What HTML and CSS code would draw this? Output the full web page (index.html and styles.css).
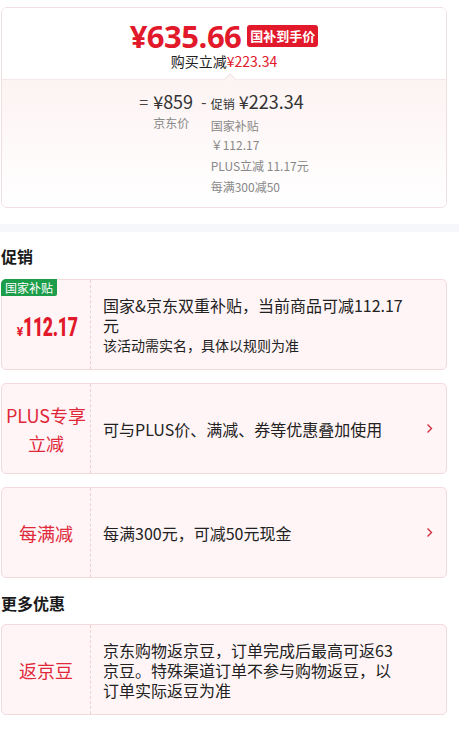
FILE: index.html
```html
<!DOCTYPE html>
<html lang="zh-CN">
<head>
  <meta charset="UTF-8">
  <meta name="viewport" content="width=device-width, initial-scale=1.0">
  <title>促销</title>
  <link rel="stylesheet" href="styles.css">
</head>
<body>
  <div class="top">
    <div class="summary">
      <div class="summary-head">
        <div class="final">
          <span class="final-price">¥635.66</span>
          <span class="final-tag">国补到手价</span>
        </div>
        <div class="saved">购买立减<span class="red">¥223.34</span></div>
      </div>
      <div class="summary-body">
        <div class="calc">
          <span class="op">=</span>
          <div class="term">
            <div class="amt">¥859</div>
            <div class="lbl">京东价</div>
          </div>
          <span class="op minus">-</span>
          <div class="term">
            <div class="amt"><small>促销</small> ¥223.34</div>
            <ul class="lbl details">
              <li>国家补贴<br>￥112.17</li>
              <li>PLUS立减 11.17元</li>
              <li>每满300减50</li>
            </ul>
          </div>
        </div>
      </div>
    </div>
  </div>

  <div class="band"></div>

  <div class="promos">
    <h2 class="heading">促销</h2>

    <div class="promo">
      <span class="tag">国家补贴</span>
      <div class="promo-left"><span class="num"><small>¥</small><b>112.17</b></span></div>
      <div class="promo-right">
        <div class="desc">国家&amp;京东双重补贴，当前商品可减112.17<br>元</div>
        <div class="note">该活动需实名，具体以规则为准</div>
      </div>
    </div>

    <div class="promo">
      <div class="promo-left"><span class="label">PLUS专享<br>立减</span></div>
      <div class="promo-right">
        <div class="desc">可与PLUS价、满减、券等优惠叠加使用</div>
      </div>
      <svg class="arrow" width="7" height="11" viewBox="0 0 7 11"><path d="M1.5 1.5 L5.5 5.5 L1.5 9.5" fill="none" stroke="#d0303c" stroke-width="1.4"/></svg>
    </div>

    <div class="promo">
      <div class="promo-left"><span class="label">每满减</span></div>
      <div class="promo-right">
        <div class="desc">每满300元，可减50元现金</div>
      </div>
      <svg class="arrow" width="7" height="11" viewBox="0 0 7 11"><path d="M1.5 1.5 L5.5 5.5 L1.5 9.5" fill="none" stroke="#d0303c" stroke-width="1.4"/></svg>
    </div>

    <h2 class="heading more">更多优惠</h2>

    <div class="promo">
      <div class="promo-left"><span class="label">返京豆</span></div>
      <div class="promo-right">
        <div class="desc">京东购物返京豆，订单完成后最高可返63<br>京豆。特殊渠道订单不参与购物返豆，以<br>订单实际返豆为准</div>
      </div>
    </div>
  </div>
</body>
</html>
```

FILE: styles.css
```css
body {
  margin: 0;
  background: #fff;
  color: #1a1a1a;
  font-family: "Noto Sans CJK SC", "Noto Sans", sans-serif;
}

.top {
  padding: 7px 12px 16px 1px;
}

.summary {
  border: 1px solid #f2dfe2;
  border-radius: 6px;
  overflow: hidden;
}

.summary-head {
  position: relative;
  height: 71px;
  padding-top: 11px;
  box-sizing: border-box;
  text-align: center;
  background: #fff;
}

/* little notch on the divider */
.summary-head::after {
  content: "";
  position: absolute;
  left: 224px;
  bottom: -4px;
  width: 7px;
  height: 7px;
  background: #fdf4f4;
  border-top: 1px solid #f3e4e6;
  border-left: 1px solid #f3e4e6;
  transform: rotate(45deg);
}

.final {
  display: flex;
  justify-content: center;
  align-items: center;
  height: 34px;
}

.final-price {
  font-family: "Open Sans", sans-serif;
  font-weight: 700;
  font-size: 31px;
  letter-spacing: -0.5px;
  color: #e2182b;
  line-height: 34px;
}

.final-tag {
  margin-left: 6px;
  height: 22px;
  line-height: 22px;
  padding: 0 3px;
  border-radius: 3px;
  background: #e2182b;
  color: #fff;
  font-size: 13px;
  font-weight: 700;
}

.saved {
  font-size: 14px;
  line-height: 16px;
  color: #222;
}

.red {
  color: #e2182b;
}

.summary-body {
  border-top: 1px solid #f6e9ea;
  padding: 9px 0 11px;
  background: linear-gradient(#fdf3f3, #fff);
}

.calc {
  display: flex;
  justify-content: center;
}

.op {
  font-size: 16px;
  line-height: 24px;
  color: #444;
  margin-right: 5px;
}

.minus {
  margin: 0 4px 0 8px;
}

.amt {
  font-size: 18px;
  line-height: 24px;
  color: #333;
}

.amt small {
  font-size: 12px;
}

.lbl {
  font-size: 12px;
  line-height: 19px;
  color: #888;
}

.details {
  list-style: none;
  margin: 0;
  padding: 0;
}

.details li + li {
  margin-top: 2px;
}

.band {
  height: 8px;
  background: #f5f7fa;
}

.promos {
  padding: 0 12px 0 1px;
}

.heading {
  margin: 0;
  padding: 13px 0 12px;
  font-size: 16px;
  line-height: 22px;
  font-weight: 700;
  color: #1a1a1a;
}

.heading.more {
  padding: 1px 0 10px;
}

.promo {
  position: relative;
  display: flex;
  align-items: center;
  min-height: 89px;
  border: 1px solid #f2dadd;
  border-radius: 5px;
  background: #fff5f6;
  margin-bottom: 13px;
}

.promo-left {
  align-self: stretch;
  width: 88px;
  flex: none;
  display: flex;
  justify-content: center;
  align-items: center;
  border-right: 1px dashed #ecd0d4;
  text-align: center;
}

.label {
  font-size: 18px;
  line-height: 28px;
  color: #e0283a;
}

.num {
  display: flex;
  align-items: baseline;
  padding-top: 4px;
  color: #e2182b;
  font-family: "Roboto", sans-serif;
  font-weight: 700;
}

.num small {
  font-size: 12px;
  font-weight: 700;
}

.num b {
  display: inline-block;
  font-size: 26px;
  letter-spacing: -0.5px;
  width: 52px;
  transform: scaleX(0.68);
  transform-origin: left center;
  white-space: nowrap;
}

.tag {
  position: absolute;
  left: -1px;
  top: -1px;
  height: 17px;
  line-height: 17px;
  padding: 0 4px;
  border-radius: 5px 0 2px 0;
  background: #1c9d49;
  color: #fff;
  font-size: 12px;
}

.promo-right {
  flex: 1;
  padding-left: 12px;
}

.desc {
  font-size: 16px;
  line-height: 20px;
  color: #222;
}

.note {
  font-size: 14px;
  line-height: 20px;
  color: #222;
}

.arrow {
  position: absolute;
  right: 13px;
  top: 50%;
  margin-top: -6px;
}
```
